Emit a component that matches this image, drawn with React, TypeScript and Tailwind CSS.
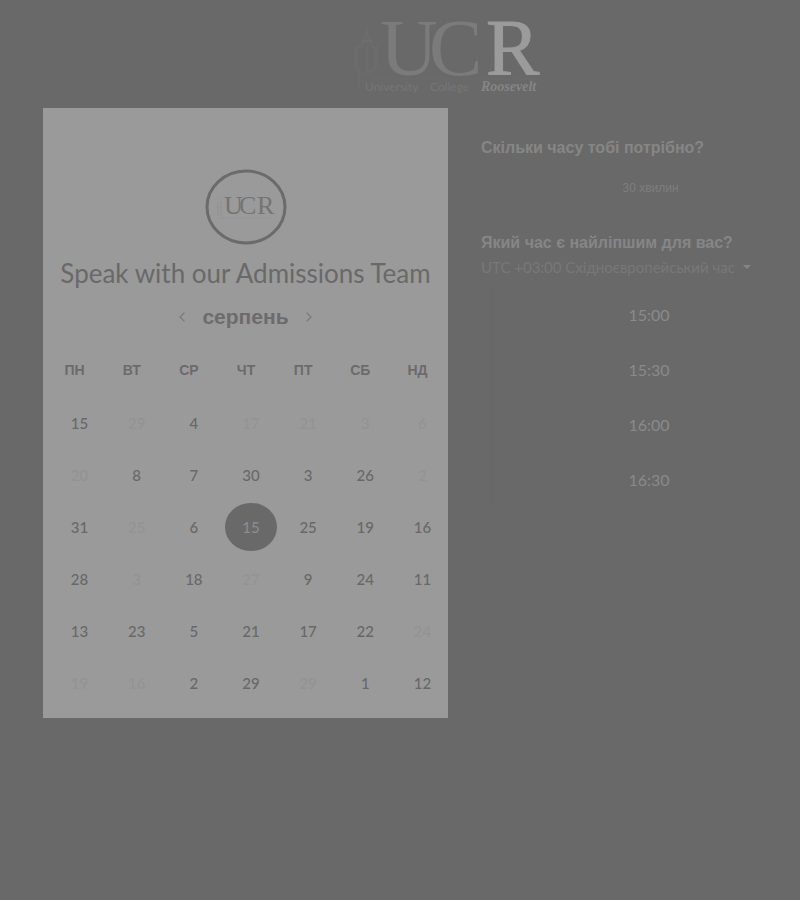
import { ChevronLeft, ChevronRight } from "lucide-react";

const WEEKDAYS = ["ПН", "ВТ", "СР", "ЧТ", "ПТ", "СБ", "НД"];

type Day = { n: number; off?: boolean; selected?: boolean };

const on = (n: number): Day => ({ n });
const off = (n: number): Day => ({ n, off: true });

const WEEKS: Day[][] = [
  [on(15), off(29), on(4), off(17), off(21), off(3), off(6)],
  [off(20), on(8), on(7), on(30), on(3), on(26), off(2)],
  [on(31), off(25), on(6), { n: 15, selected: true }, on(25), on(19), on(16)],
  [on(28), off(3), on(18), off(27), on(9), on(24), on(11)],
  [on(13), on(23), on(5), on(21), on(17), on(22), off(24)],
  [off(19), off(16), on(2), on(29), off(29), on(1), on(12)],
];

const TIMES = ["15:00", "15:30", "16:00", "16:30"];

function SchoolLogo() {
  return (
    <svg width="196" height="78" viewBox="0 0 196 78" overflow="visible" role="img" aria-label="University College Roosevelt">
      <g fill="none" stroke="#707070" strokeWidth="1">
        <path d="M17 7v8M17 14l-4 8h8zM12 22h10v6h3v22l-3 3M12 22v6H7v22l3 3M5 27v20M27 27v20M9 53v17M17 28v24M22 53h-8" />
        <path d="M24 60h166" stroke="#6d6d6d" />
      </g>
      <g fontSize="80" className="font-['Liberation_Serif',serif]">
        <text x="30" y="56" fill="#7b7b7b">U</text>
        <text x="79" y="56" fill="#7b7b7b">C</text>
        <text x="136" y="56" fill="#9b9b9b" stroke="#9b9b9b">R</text>
      </g>
      <g fontSize="12" className="font-[Lato,sans-serif]" fill="#767676">
        <text x="15" y="72">University</text>
        <text x="80" y="72">College</text>
      </g>
      <text x="131" y="72" fontSize="14" fontStyle="italic" fontWeight="700" fill="#858585" className="font-['Liberation_Serif',serif]">
        Roosevelt
      </text>
    </svg>
  );
}

function RoundLogo() {
  return (
    <svg width="82" height="76" viewBox="0 0 82 76" role="img" aria-label="UCR">
      <ellipse cx="41" cy="38" rx="39" ry="36" fill="none" stroke="#6b6b6b" strokeWidth="3" />
      <path d="M13 32v15M16 29v18M11 38h6" stroke="#929292" fill="none" />
      <g fontSize="26" fill="#747474" className="font-['Liberation_Serif',serif]">
        <text x="19" y="45">U</text>
        <text x="34" y="45">C</text>
        <text x="52" y="45">R</text>
      </g>
      <path d="M16 49h50" stroke="#929292" strokeDasharray="3 1" />
    </svg>
  );
}

function dayClass(day: Day) {
  if (day.selected) return "block h-12 w-full rounded-[50%] bg-[#696969] text-[#8c8c8c]";
  if (day.off) return "block h-12 w-full text-[#939393]";
  return "block h-12 w-full text-[#686868]";
}

export default function App() {
  return (
    <div className="min-h-screen bg-[#696969] font-[Lato,sans-serif]">
      <header className="flex h-27 justify-center pt-[19px] pl-24">
        <SchoolLogo />
      </header>

      <main className="flex items-start pl-[43px]">
        <section className="w-[405px] shrink-0 bg-[#9a9a9a] pb-[9px]">
          <div className="flex justify-center pt-[61px]">
            <RoundLogo />
          </div>
          <h1 className="mt-[11px] text-center text-[26px] leading-[34px] whitespace-nowrap text-[#696969]">
            Speak with our Admissions Team
          </h1>
          <div className="flex h-[53px] items-center justify-center gap-3 text-[#7c7c7c]">
            <button aria-label="Попередній місяць">
              <ChevronLeft size={16} strokeWidth={2} />
            </button>
            <h2 className="font-['Liberation_Sans',sans-serif] text-[21px] leading-[28px] font-bold text-[#6c6c6c]">серпень</h2>
            <button aria-label="Наступний місяць">
              <ChevronRight size={16} strokeWidth={2} />
            </button>
          </div>
          <div className="pl-[5px]">
            <table className="w-full table-fixed border-collapse">
              <thead>
                <tr className="h-[54px]">
                  {WEEKDAYS.map((d) => (
                    <th key={d} scope="col" className="p-0 pr-1 text-center font-['Liberation_Sans',sans-serif] text-[14px] font-bold text-[#6b6b6b]">
                      {d}
                    </th>
                  ))}
                </tr>
              </thead>
              <tbody className="text-[15px] font-medium">
                {WEEKS.map((week, i) => (
                  <tr key={i} className="h-[52px]">
                    {week.map((day, j) => (
                      <td key={j} className="p-0 pl-[6px] text-center">
                        <button disabled={day.off} aria-pressed={!!day.selected} className={dayClass(day)}>
                          {day.n}
                        </button>
                      </td>
                    ))}
                  </tr>
                ))}
              </tbody>
            </table>
          </div>
        </section>

        <section className="min-w-0 flex-1 pt-7 pl-[33px]">
          <h2 className="font-['Liberation_Sans',sans-serif] text-[16px] leading-6 font-bold text-[#868686]">
            Скільки часу тобі потрібно?
          </h2>
          <button className="mt-2 block h-10 w-full pl-5 text-center font-['Liberation_Sans',sans-serif] text-[12px] text-[#7e7e7e]">
            30 хвилин
          </button>
          <h2 className="mt-[23px] font-['Liberation_Sans',sans-serif] text-[16px] leading-6 font-bold text-[#868686]">
            Який час є найліпшим для вас?
          </h2>
          <label className="flex h-6 items-center gap-2 text-[#787878]">
            <select aria-label="Часовий пояс" className="appearance-none bg-transparent text-[15px] leading-6">
              <option>UTC +03:00 Східноєвропейський час</option>
            </select>
            <svg width="8" height="4" viewBox="0 0 8 4" fill="#858585" aria-hidden="true">
              <path d="M0 0h8L4 4z" />
            </svg>
          </label>
          <div className="mt-2 pl-2.5">
            {TIMES.map((t) => (
              <button key={t} className="block h-[55px] w-full border-l border-[#676767] pl-1.5 text-center text-[16px] text-[#8a8a8a]">
                {t}
              </button>
            ))}
          </div>
        </section>
      </main>
    </div>
  );
}
